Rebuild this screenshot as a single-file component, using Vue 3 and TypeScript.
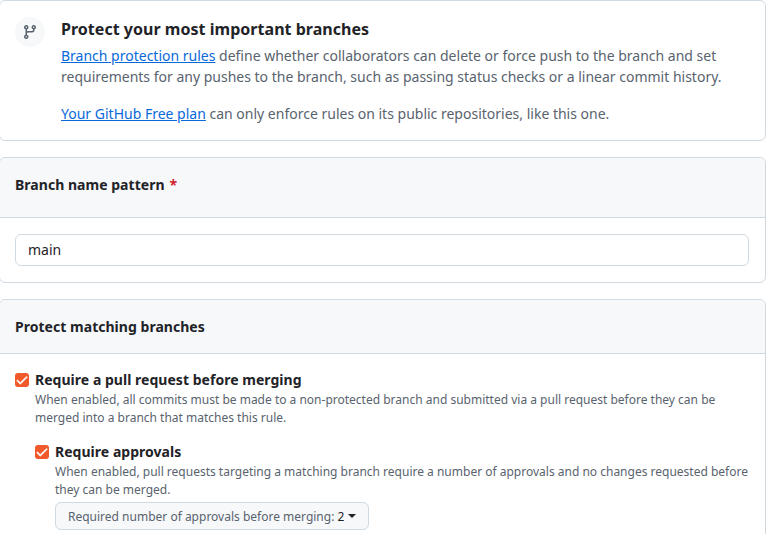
<script setup lang="ts">
const checkPath = 'M13.78 4.22a.75.75 0 0 1 0 1.06l-7.25 7.25a.75.75 0 0 1-1.06 0L2.22 9.28a.75.75 0 0 1 1.06-1.06L6 10.94l6.72-6.72a.75.75 0 0 1 1.06 0Z'
</script>

<template>
  <div class="page">
    <section class="box intro">
      <div class="intro-icon">
        <svg width="16" height="16" viewBox="0 0 16 16" fill="#59636e">
          <path d="M9.5 3.25a2.25 2.25 0 1 1 3 2.122V6A2.5 2.5 0 0 1 10 8.5H6a1 1 0 0 0-1 1v1.128a2.251 2.251 0 1 1-1.5 0V5.372a2.25 2.25 0 1 1 1.5 0v1.836A2.493 2.493 0 0 1 6 7h4a1 1 0 0 0 1-1v-.628A2.25 2.25 0 0 1 9.5 3.25Zm-6 0a.75.75 0 1 0 1.5 0 .75.75 0 0 0-1.5 0Zm8.25-.75a.75.75 0 1 0 0 1.5.75.75 0 0 0 0-1.5ZM4.25 12a.75.75 0 1 0 0 1.5.75.75 0 0 0 0-1.5Z" />
        </svg>
      </div>
      <div class="intro-body">
        <h2>Protect your most important branches</h2>
        <p class="lead">
          <a href="#">Branch protection rules</a> define whether collaborators can delete or force push to the branch and set requirements for any pushes to the branch, such as passing status checks or a linear commit history.
        </p>
        <p class="plan">
          <a href="#">Your GitHub Free plan</a> can only enforce rules on its public repositories, like this one.
        </p>
      </div>
    </section>

    <section class="box pattern">
      <header class="box-header tall">Branch name pattern <span class="required">*</span></header>
      <div class="pattern-body">
        <input class="pattern-input" type="text" value="main" />
      </div>
    </section>

    <section class="box">
      <header class="box-header">Protect matching branches</header>
      <div class="rules">
        <div class="rule">
          <span class="check">
            <svg width="14" height="14" viewBox="0 0 16 16" fill="#fff" stroke="#fff" stroke-width="0.6"><path :d="checkPath" /></svg>
          </span>
          <div>
            <div class="rule-title">Require a pull request before merging</div>
            <p class="rule-note">When enabled, all commits must be made to a non-protected branch and submitted via a pull request before they can be merged into a branch that matches this rule.</p>
          </div>
        </div>
        <div class="rule nested">
          <span class="check">
            <svg width="14" height="14" viewBox="0 0 16 16" fill="#fff" stroke="#fff" stroke-width="0.6"><path :d="checkPath" /></svg>
          </span>
          <div>
            <div class="rule-title">Require approvals</div>
            <p class="rule-note">When enabled, pull requests targeting a matching branch require a number of approvals and no changes requested before they can be merged.</p>
            <button class="approvals" type="button"><span>Required number of approvals before merging:&nbsp;</span><span class="count">2</span><span class="caret"></span></button>
          </div>
        </div>
      </div>
    </section>
  </div>
</template>

<style scoped>
.page {
  height: 534px;
  overflow: hidden;
  font-family: "Noto Sans", sans-serif;
  font-size: 14px;
  color: #1f2328;
  background: #fff;
}

.box {
  border: 1px solid #d1d9e0;
  border-radius: 6px;
  margin: 0 0 16px -1px;
  box-sizing: border-box;
}

.intro {
  display: flex;
  height: 141px;
  padding: 16px 15px;
  gap: 16px;
}

.intro-icon {
  flex: none;
  width: 30px;
  height: 30px;
  border-radius: 50%;
  background: #f6f8fa;
  display: flex;
  align-items: center;
  justify-content: center;
}

.intro-body h2 {
  margin: 0;
  font-size: 16px;
  line-height: 24px;
  font-weight: 700;
  letter-spacing: 0.03px;
}

.intro-body p {
  margin: 0;
  line-height: 21px;
  color: #59636e;
}

.intro-body .lead {
  margin-top: 4px;
}

.intro-body .plan {
  margin-top: 16px;
}

.intro-body a {
  color: #0969da;
  text-decoration: underline;
}

.box-header {
  height: 53px;
  padding: 0 15px;
  display: flex;
  align-items: center;
  gap: 5px;
  font-weight: 700;
  letter-spacing: 0.03px;
  background: #f6f8fa;
  border-bottom: 1px solid #d1d9e0;
  border-radius: 6px 6px 0 0;
}

.box-header.tall {
  padding-bottom: 6px;
  box-sizing: content-box;
}

.required {
  color: #d1242f;
}

.pattern-body {
  padding: 16px 16px 16px 15px;
}

.pattern-input {
  display: block;
  width: 100%;
  height: 32px;
  box-sizing: border-box;
  padding: 0 12px 2px;
  border: 1px solid #d1d9e0;
  border-radius: 6px;
  font: inherit;
  color: #1f2328;
  background: #fff;
}

.rules {
  padding: 16px 17px 40px 15px;
}

.rule {
  display: flex;
  gap: 6px;
}

.rule.nested {
  margin-top: 15px;
  margin-left: 20px;
}

.check {
  flex: none;
  width: 14px;
  height: 14px;
  margin-top: 3px;
  border-radius: 3px;
  background: #f1592a;
  display: flex;
  align-items: center;
  justify-content: center;
}

.rule-title {
  font-weight: 700;
  letter-spacing: 0.03px;
  line-height: 20px;
}

.rule-note {
  margin: 1px 0 0;
  font-size: 12px;
  line-height: 18px;
  color: #59636e;
}

.approvals {
  display: inline-flex;
  align-items: center;
  height: 28px;
  margin-top: 3px;
  padding: 0 12px;
  border: 1px solid #d1d9e0;
  border-radius: 6px;
  background: #f6f8fa;
  font: inherit;
  font-size: 12px;
  color: #59636e;
}

.count {
  color: #1f2328;
}

.caret {
  width: 0;
  height: 0;
  margin-left: 4px;
  border-top: 4px solid #1f2328;
  border-left: 4px solid transparent;
  border-right: 4px solid transparent;
}
</style>
